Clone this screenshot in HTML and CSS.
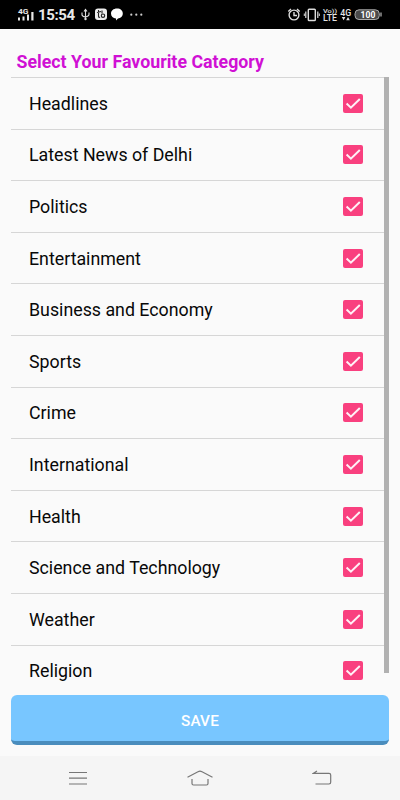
FILE: index.html
```html
<!DOCTYPE html>
<html lang="en">
<head>
<meta charset="utf-8">
<title>Categories</title>
<link rel="stylesheet" href="styles.css">
</head>
<body>
<header class="status">
  <svg class="status-icons" width="400" height="29" viewBox="0 0 400 29" fill="none">
    <g fill="#e8e8e8">
      <text x="18" y="13.700" class="net" textLength="10.500" lengthAdjust="spacingAndGlyphs">4G</text>
      <path d="M18 17.500h2v3h-2zM22.500 16.500h2v4h-2zM27 14.500h2v6h-2zM31.300 12h2.200v8.500h-2.200z"/>
      <text x="38" y="20" class="clock" textLength="37">15:54</text>
    </g>
    <g stroke="#ddd" stroke-width="1.100">
      <path d="M85.500 10v9M82 12.500v2.200q0 1.800 3.500 2.300M89 12.500v2q0 1.700-3.500 2.500"/>
      <path d="M84 11.500l1.500-2 1.500 2"/>
    </g>
    <circle cx="85.500" cy="19" r="1.200" fill="#ddd"/>
    <rect x="95" y="8.500" width="12" height="11.500" rx="3" fill="#eee"/>
    <path d="M98.500 10v6q0 2 1.500 1M97 12.500l4-1M102 10.500v3" stroke="#222" stroke-width="1.100"/>
    <circle cx="103" cy="15.700" r="1.700" stroke="#222" stroke-width="1.100"/>
    <path d="M117 8.500c3.600 0 5.800 2.100 5.800 5s-2.200 4.800-4.800 5l-2 2v-2c-3-.3-5-2.200-5-5s2.400-5 6-5z" fill="#fff"/>
    <g fill="#ccc"><circle cx="131.300" cy="14.700" r="1.100"/><circle cx="136.300" cy="14.700" r="1.100"/><circle cx="141.300" cy="14.700" r="1.100"/></g>
    <g stroke="#ddd" stroke-width="1.400">
      <circle cx="294" cy="15" r="4.900"/>
      <path d="M294 12v3.500h3M288.300 11.500l2.700-2.500M299.700 11.500L297 9"/>
      <rect x="308.300" y="9.200" width="7" height="11.300" rx=".8"/>
      <path d="M305.800 11.500v6.500M317.800 11.500v6.500" stroke-width="1.200"/>
      <path d="M304.300 13.500v2.500M319.300 13.500v2.500" stroke-width="1"/>
    </g>
    <g fill="#e4e4e4">
      <text x="323" y="12.800" class="tiny" textLength="14" lengthAdjust="spacingAndGlyphs">Vo))</text>
      <text x="323" y="21.300" class="lte" textLength="14" lengthAdjust="spacingAndGlyphs">LTE</text>
      <text x="340.200" y="15.500" class="net2" textLength="11" lengthAdjust="spacingAndGlyphs">4G</text>
      <path d="M341.800 17h3.600l-1.800 3.200zM346.200 20.200h3.600L348 17z"/>
    </g>
    <rect x="355" y="9.800" width="24.300" height="9.700" rx="4" fill="#4a4a4a" stroke="#aaa"/>
    <path d="M381 12.500v4" stroke="#aaa" stroke-width="1.300"/>
    <text x="360.500" y="17.700" class="batt" textLength="15" fill="#fff">100</text>
  </svg>
</header>
<main class="page">
  <h1 class="title">Select Your Favourite Category</h1>
  <div class="viewport">
    <ul class="list">
      <li class="row"><span>Headlines</span><svg class="check" viewBox="0 0 20 19"><path d="M3.600 9.500l4.300 4.200L16.800 5"/></svg></li>
      <li class="row"><span>Latest News of Delhi</span><svg class="check" viewBox="0 0 20 19"><path d="M3.600 9.500l4.300 4.200L16.800 5"/></svg></li>
      <li class="row"><span>Politics</span><svg class="check" viewBox="0 0 20 19"><path d="M3.600 9.500l4.300 4.200L16.800 5"/></svg></li>
      <li class="row"><span>Entertainment</span><svg class="check" viewBox="0 0 20 19"><path d="M3.600 9.500l4.300 4.200L16.800 5"/></svg></li>
      <li class="row"><span>Business and Economy</span><svg class="check" viewBox="0 0 20 19"><path d="M3.600 9.500l4.300 4.200L16.800 5"/></svg></li>
      <li class="row"><span>Sports</span><svg class="check" viewBox="0 0 20 19"><path d="M3.600 9.500l4.300 4.200L16.800 5"/></svg></li>
      <li class="row"><span>Crime</span><svg class="check" viewBox="0 0 20 19"><path d="M3.600 9.500l4.300 4.200L16.800 5"/></svg></li>
      <li class="row"><span>International</span><svg class="check" viewBox="0 0 20 19"><path d="M3.600 9.500l4.300 4.200L16.800 5"/></svg></li>
      <li class="row"><span>Health</span><svg class="check" viewBox="0 0 20 19"><path d="M3.600 9.500l4.300 4.200L16.800 5"/></svg></li>
      <li class="row"><span>Science and Technology</span><svg class="check" viewBox="0 0 20 19"><path d="M3.600 9.500l4.300 4.200L16.800 5"/></svg></li>
      <li class="row"><span>Weather</span><svg class="check" viewBox="0 0 20 19"><path d="M3.600 9.500l4.300 4.200L16.800 5"/></svg></li>
      <li class="row"><span>Religion</span><svg class="check" viewBox="0 0 20 19"><path d="M3.600 9.500l4.300 4.200L16.800 5"/></svg></li>
    </ul>
    <div class="scrollbar"></div>
  </div>
  <button class="save">SAVE</button>
</main>
<nav class="nav">
  <svg width="20" height="16" viewBox="0 0 20 16"><path d="M1 2.500h18M1 8.200h18M1 14h18"/></svg>
  <svg width="28" height="18" viewBox="0 0 28 18"><path d="M1.500 8.200L12 2.700q2-1 4 0l10.500 5.500M6 10v4.500q0 1.500 1.500 1.500h13q1.500 0 1.500-1.500V10"/></svg>
  <svg width="20" height="16" viewBox="0 0 20 16"><path d="M5 1L1.500 3.300H17q1.700 0 1.700 1.700v7.300q0 1.700-1.700 1.700H3.500"/></svg>
</nav>
</body>
</html>
```
FILE: styles.css
```css
* { box-sizing: border-box; }
body {
  margin: 0;
  width: 400px;
  height: 800px;
  display: flex;
  flex-direction: column;
  overflow: hidden;
  background: #fafafa;
  font-family: Roboto, sans-serif;
}
.status { height: 29px; background: #000; flex: none; }
.status-icons { display: block; font-family: Roboto, sans-serif; }
.net { font-size: 8px; font-weight: 700; }
.clock { font-size: 15px; font-weight: 700; }
.tiny { font-size: 6px; font-weight: 500; }
.lte { font-size: 8.5px; font-weight: 500; }
.net2 { font-size: 9px; font-weight: 500; }
.batt { font-size: 8.5px; font-weight: 700; }
.page {
  flex: 1;
  min-height: 0;
  padding: 0 11px;
  display: flex;
  flex-direction: column;
}
.title {
  margin: 0;
  height: 48px;
  padding: 20px 0 0 5.5px;
  font-size: 17.8px;
  line-height: 25px;
  font-weight: 700;
  color: #d010d4;
  white-space: nowrap;
}
.viewport { display: flex; height: 618px; overflow: hidden; }
.list { flex: 1; margin: 0 -5px 0 0; padding: 0; list-style: none; }
.row {
  height: 51.6px;
  padding: 0 20px 0 18px;
  display: flex;
  align-items: center;
  justify-content: space-between;
  border-top: 1px solid #d6d6d6;
  font-size: 17.8px;
  color: #080808;
}
.check {
  width: 20px;
  height: 19px;
  margin-right: 6px;
  border-radius: 2px;
  background: #f9407f;
  fill: none;
  stroke: #fff0f6;
  stroke-width: 2;
}
.scrollbar { width: 5px; height: 596px; background: #b1b1b1; }
.save {
  height: 50px;
  padding: 5px 0 0;
  border: 0;
  border-bottom: 4px solid #4a8dbd;
  border-radius: 6px;
  background: #78c6ff;
  color: #fff;
  font: 500 15.3px Roboto, sans-serif;
  letter-spacing: 0.2px;
}
.nav {
  height: 44px;
  flex: none;
  display: flex;
  align-items: center;
  justify-content: space-between;
  padding: 0 68px;
  background: #f5f5f5;
}
.nav svg { fill: none; stroke: #777; stroke-width: 1.2; }
```
